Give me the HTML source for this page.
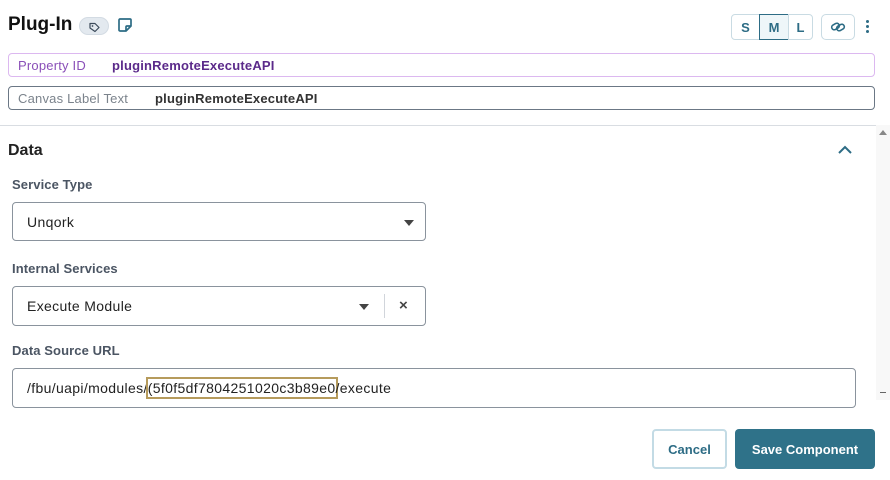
<!DOCTYPE html>
<html><head><meta charset="utf-8"><style>
*{box-sizing:border-box;margin:0;padding:0}
body{width:890px;height:480px;overflow:hidden;background:#fff;font-family:"Liberation Sans",sans-serif;position:relative;color:#1f2937}
.abs{position:absolute}
.title{left:8px;top:14px;font-size:19px;font-weight:bold;color:#111}
.pill{left:79px;top:17px;width:30px;height:18px;border-radius:9px;background:#e3e9ef;border:1px solid #d3dbe3}
.field{border-radius:4px;font-size:13px;display:flex;align-items:center;padding-left:9px;letter-spacing:0.2px}
.lbl{font-size:13px;font-weight:bold;color:#4b5563;letter-spacing:0.1px}
.box{border:1px solid #8a939d;border-radius:4px;background:#fff;font-size:14px;letter-spacing:0.35px;display:flex;align-items:center;padding-left:14px;color:#222}
.seg{top:14px;height:26px;border:1px solid #c9dbe3;font-size:13px;font-weight:bold;color:#2d6c85;display:flex;align-items:center;justify-content:center}
.caret{width:0;height:0;border-left:5px solid transparent;border-right:5px solid transparent;border-top:6px solid #444}
</style></head><body>
<div class="abs title">Plug-In</div>
<div class="abs pill"><svg width="30" height="18" viewBox="0 0 30 18"><path d="M10 5.5h5l4 4-4 4-5-3.5z" fill="none" stroke="#3b4a5a" stroke-width="1.2" stroke-linejoin="round"/><circle cx="12.5" cy="8" r="0.9" fill="#3b4a5a"/></svg></div>
<svg class="abs" style="left:117px;top:17px" width="16" height="16" viewBox="0 0 16 16"><path d="M3 2h10a1 1 0 0 1 1 1v6l-5 5H3a1 1 0 0 1-1-1V3a1 1 0 0 1 1-1zM14 9h-4a1 1 0 0 0-1 1v4" fill="none" stroke="#2d6c85" stroke-width="1.7" stroke-linejoin="round"/></svg>

<div class="abs seg" style="left:731px;width:29px;border-radius:4px 0 0 4px">S</div>
<div class="abs seg" style="left:759px;width:30px;border:1px solid #2d6c85;background:#eef6f9;color:#2d6c85">M</div>
<div class="abs seg" style="left:788px;width:25px;border-radius:0 4px 4px 0">L</div>
<div class="abs seg" style="left:821px;width:34px;border-radius:5px"><svg width="16" height="12" viewBox="0 0 16 12"><g fill="none" stroke="#2d6c85" stroke-width="1.6"><rect x="1.5" y="3" width="8" height="5" rx="2.5" transform="rotate(-30 5.5 5.5)"/><rect x="6.5" y="4" width="8" height="5" rx="2.5" transform="rotate(-30 10.5 6.5)"/></g></svg></div>
<div class="abs" style="left:866px;top:20px;width:3px"><div style="width:3px;height:3px;background:#2d6c85;border-radius:50%;margin-bottom:2px"></div><div style="width:3px;height:3px;background:#2d6c85;border-radius:50%;margin-bottom:2px"></div><div style="width:3px;height:3px;background:#2d6c85;border-radius:50%"></div></div>

<div class="abs field" style="left:8px;top:53px;width:867px;height:24px;border:1px solid #dcb8f0"><span style="color:#8a4fb8;width:94px">Property ID</span><b style="color:#5b2a8a">pluginRemoteExecuteAPI</b></div>
<div class="abs field" style="left:8px;top:86px;width:867px;height:24px;border:1px solid #6b7785"><span style="color:#7b838c;width:137px">Canvas Label Text</span><b style="color:#333">pluginRemoteExecuteAPI</b></div>

<div class="abs" style="left:0;top:125px;width:876px;height:1px;background:#d9dde2"></div>
<div class="abs" style="left:876px;top:125px;width:14px;height:275px;background:#f8f8f8"></div>
<div class="abs" style="left:879px;top:130px;border-left:4px solid transparent;border-right:4px solid transparent;border-bottom:5px solid #888"></div>
<div class="abs" style="left:880px;top:392px;width:6px;height:1px;background:#666"></div>

<div class="abs" style="left:8px;top:142px;font-size:16px;font-weight:bold;color:#222">Data</div>
<svg class="abs" style="left:837px;top:145px" width="16" height="10" viewBox="0 0 16 10"><path d="M2 8l6-6 6 6" fill="none" stroke="#2d6c85" stroke-width="2"/></svg>

<div class="abs lbl" style="left:12px;top:177px">Service Type</div>
<div class="abs box" style="left:12px;top:202px;width:414px;height:39px">Unqork</div>
<div class="abs caret" style="left:404px;top:220px"></div>

<div class="abs lbl" style="left:12px;top:261px">Internal Services</div>
<div class="abs box" style="left:12px;top:286px;width:414px;height:40px">Execute Module</div>
<div class="abs caret" style="left:359px;top:304px"></div>
<div class="abs" style="left:384px;top:294px;width:1px;height:24px;background:#d1d5db"></div>
<div class="abs" style="left:399px;top:297px;font-size:15px;color:#444;font-weight:bold">×</div>

<div class="abs lbl" style="left:12px;top:343px">Data Source URL</div>
<div class="abs box" style="left:12px;top:368px;width:844px;height:40px">/fbu/uapi/modules/<span style="outline:2px solid #b69b5c;outline-offset:0;padding:1px 0">(5f0f5df7804251020c3b89e0</span>/execute</div>

<div class="abs" style="left:652px;top:429px;width:75px;height:40px;border:2px solid #c3dbe5;border-radius:4px;font-size:13px;font-weight:bold;color:#2d6c85;display:flex;align-items:center;justify-content:center">Cancel</div>
<div class="abs" style="left:735px;top:429px;width:140px;height:40px;background:#2f7289;border-radius:4px;font-size:13px;font-weight:bold;color:#fff;display:flex;align-items:center;justify-content:center">Save Component</div>
</body></html>
